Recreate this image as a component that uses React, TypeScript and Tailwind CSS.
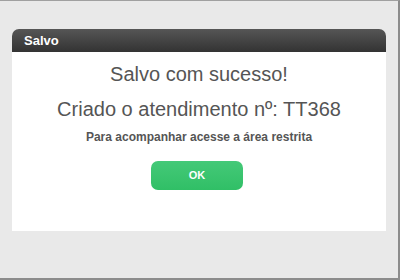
export default function App() {
  return (
    <div
      className="w-[400px] h-[280px] bg-[#e9e9e9] border-t border-t-[#a0a0a0] border-r-2 border-r-[#8c8c8c] border-b-2 border-b-[#8c8c8c] pl-[12px] pt-[28px]"
      style={{ fontFamily: '"Liberation Sans", Arial, sans-serif' }}
    >
      <div className="w-[374px] flex flex-col">
        <div className="h-[23px] rounded-t-[7px] bg-gradient-to-b from-[#565656] to-[#333333] flex items-center pl-[12px]">
          <span className="text-[13px] font-bold text-white leading-none">Salvo</span>
        </div>
        <div className="h-[179px] bg-white flex flex-col items-center pt-[10px] text-[#555555]">
          <div className="text-[20px] leading-6">Salvo com sucesso!</div>
          <div className="text-[20px] leading-6 mt-[11px]">Criado o atendimento nº: TT368</div>
          <div className="text-[12px] leading-4 font-bold mt-[8px]">
            Para acompanhar acesse a área restrita
          </div>
          <button className="mt-[16px] mr-[4px] w-[92px] h-[29px] rounded-[7px] bg-gradient-to-b from-[#44c978] to-[#30bf66] text-white text-[11px] font-bold flex items-center justify-center">
            OK
          </button>
        </div>
      </div>
    </div>
  );
}
